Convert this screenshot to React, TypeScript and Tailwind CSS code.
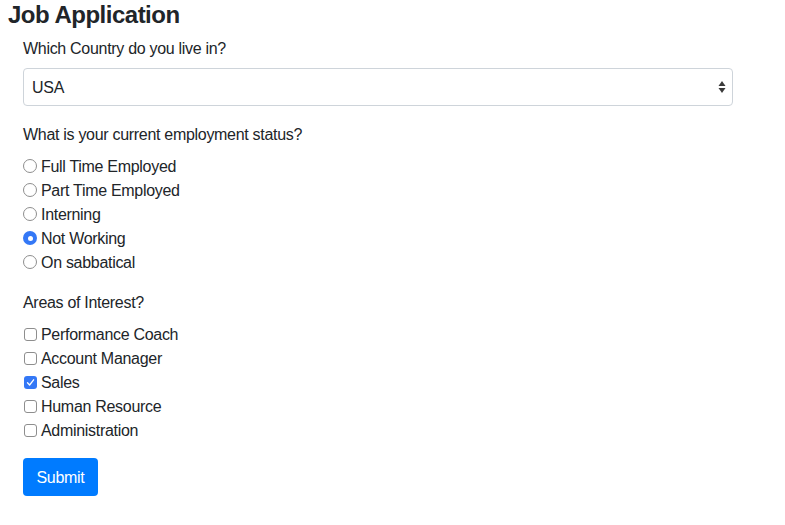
import React from "react";

const statuses = [
  "Full Time Employed",
  "Part Time Employed",
  "Interning",
  "Not Working",
  "On sabbatical",
];

const interests = [
  "Performance Coach",
  "Account Manager",
  "Sales",
  "Human Resource",
  "Administration",
];

const Radio = ({ label, checked }: { label: string; checked?: boolean }) => (
  <label className="flex items-center h-6">
    {checked ? (
      <span className="w-[14px] h-[14px] rounded-full bg-[#3478f6] flex items-center justify-center">
        <span className="w-[5px] h-[5px] rounded-full bg-white" />
      </span>
    ) : (
      <span className="w-[14px] h-[14px] rounded-full border border-[#8e8e8e] bg-white" />
    )}
    <span className="ml-1 pt-0.5">{label}</span>
  </label>
);

const Checkbox = ({ label, checked }: { label: string; checked?: boolean }) => (
  <label className="flex items-center h-6">
    {checked ? (
      <span className="ml-px w-[13px] h-[13px] rounded-[3px] bg-[#3478f6] flex items-center justify-center">
        <svg width="9" height="9" viewBox="0 0 9 9" fill="none">
          <path d="M1.5 4.8 L3.6 7 L7.6 1.8" stroke="white" strokeWidth="1.3" strokeLinecap="round" strokeLinejoin="round" />
        </svg>
      </span>
    ) : (
      <span className="ml-px w-[13px] h-[13px] rounded-[3px] border border-[#8e8e8e] bg-white" />
    )}
    <span className="ml-1 pt-0.5">{label}</span>
  </label>
);

const App = () => {
  return (
    <div className="w-[785px] h-[525px] bg-white text-[#212529] text-base leading-6 tracking-[-0.3px] font-['Liberation_Sans',Arial,sans-serif]">
      <h1 className="pl-2 pt-px text-2xl leading-[28px] font-bold tracking-[-0.5px]">Job Application</h1>
      <form className="pl-[23px] w-[733px] pt-[7px]">
        <div className="mb-4">
          <p className="mb-[7px] pt-px">Which Country do you live in?</p>
          <div className="h-[38px] border border-[#ced4da] rounded flex items-center justify-between pl-2 pr-[6px]">
            <span className="pt-0.5">USA</span>
            <svg width="8" height="14" viewBox="0 0 8 14">
              <path d="M4 1 L7.5 6 L0.5 6 Z" fill="#3a3a3a" />
              <path d="M4 13 L7.5 8 L0.5 8 Z" fill="#3a3a3a" />
            </svg>
          </div>
        </div>
        <div className="mb-4">
          <p className="mb-[7px] pt-px">What is your current employment status?</p>
          {statuses.map((s) => (
            <Radio key={s} label={s} checked={s === "Not Working"} />
          ))}
        </div>
        <div className="mb-4">
          <p className="mb-[7px] pt-px">Areas of Interest?</p>
          {interests.map((s) => (
            <Checkbox key={s} label={s} checked={s === "Sales"} />
          ))}
        </div>
        <button type="button" className="h-[38px] w-[75px] pt-0.5 bg-[#007bff] text-white rounded">
          Submit
        </button>
      </form>
    </div>
  );
};

export default App;
